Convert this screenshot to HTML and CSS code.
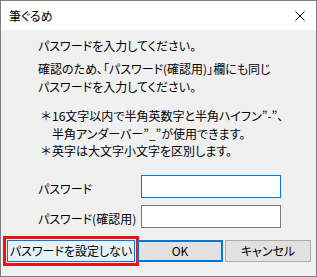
FILE: index.html
```html
<!DOCTYPE html>
<html lang="ja">

<head>
    <meta charset="UTF-8">
    <title>筆ぐるめ</title>
    <link rel="stylesheet" href="styles.css">
</head>

<body>
    <div class="window">
        <div class="titlebar">
            <span class="title">筆ぐるめ</span>
            <svg class="close" width="10" height="10" viewBox="0 0 10 10">
                <path d="M0.5 0.5 L9.5 9.5 M9.5 0.5 L0.5 9.5" stroke="#000" stroke-width="1" fill="none" />
            </svg>
        </div>

        <div class="content">
            <p class="msg">パスワードを入力してください。</p>
            <p class="msg lead">確認のため、「パスワード(確認用)」欄にも同じ<br>パスワードを入力してください。</p>

            <ul class="notes">
                <li><span class="mark">＊</span><span>16文字以内で半角英数字と半角ハイフン”-”、<br>半角アンダーバー”_”が使用できます。</span></li>
                <li><span class="mark">＊</span><span>英字は大文字小文字を区別します。</span></li>
            </ul>

            <div class="form">
                <label for="pw">パスワード</label>
                <input type="password" id="pw" class="focused">
                <label for="pw2">パスワード(確認用)</label>
                <input type="password" id="pw2">
            </div>
        </div>

        <div class="buttons">
            <button class="btn hover">パスワードを設定しない</button>
            <button class="btn default">OK</button>
            <button class="btn">キャンセル</button>
        </div>
    </div>
</body>

</html>
```

FILE: styles.css
```css
html,
body {
    margin: 0;
    padding: 0;
    width: 317px;
    height: 277px;
}

body {
    font-family: "Noto Sans CJK JP", "Noto Sans", sans-serif;
    font-size: 12px;
    font-feature-settings: "palt";
    color: #000;
}

.window {
    box-sizing: border-box;
    width: 317px;
    height: 277px;
    border: 1px solid #7f7f7f;
    background-color: #f0f0f0;
    display: flex;
    flex-direction: column;
}

.titlebar {
    height: 29px;
    background-color: #fff;
    display: flex;
    align-items: center;
    justify-content: space-between;
    padding: 0 11px 0 8px;
}

.title {
    font-size: 12px;
    line-height: 14px;
    padding-top: 1px;
}

.close {
    display: block;
}

.content {
    padding: 7px 0 0 37px;
}

p {
    margin: 0;
    line-height: 18px;
}

.lead {
    margin-top: 5px;
}

.notes {
    list-style: none;
    margin: 11px 0 0 3px;
    padding: 0;
    line-height: 17.5px;
}

.notes li {
    display: flex;
}

.mark {
    width: 11px;
    flex: none;
}

.form {
    display: grid;
    grid-template-columns: 103px 140px;
    row-gap: 7px;
    margin-top: 15px;
    align-items: center;
}

.form label {
    padding-top: 4px;
}

.form input {
    box-sizing: border-box;
    width: 140px;
    height: 23px;
    margin: 0;
    border: 1px solid #7a7a7a;
    background-color: #fff;
    outline: none;
}

.form input.focused {
    border-color: #0078d7;
}

.buttons {
    display: flex;
    gap: 2px;
    padding: 12px 0 0 6px;
}

.btn {
    box-sizing: border-box;
    height: 22px;
    margin: 0;
    padding: 0;
    font-family: inherit;
    font-size: 12px;
    font-feature-settings: "palt";
    color: #000;
    background-color: #e1e1e1;
    border: 1px solid #adadad;
    width: 86px;
}

.btn.hover {
    width: 128px;
    background-color: #e5f1fb;
    border-color: #0078d7;
    outline: 3px solid #ee1111;
    outline-offset: 1px;
}

.btn.default {
    width: 86px;
    border: 2px solid #0078d7;
}
```
